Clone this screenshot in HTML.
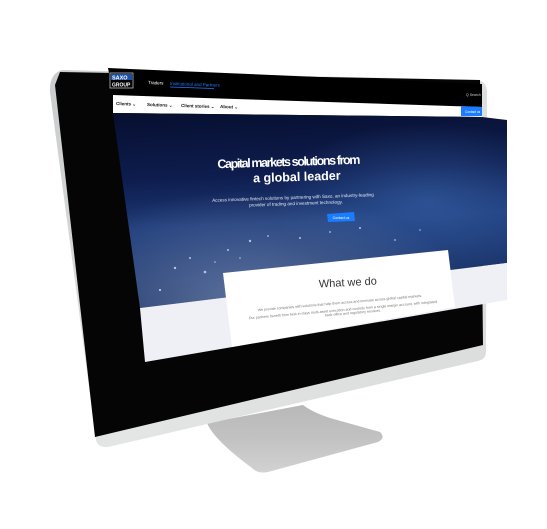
<!DOCTYPE html>
<html><head><meta charset="utf-8"><style>
html,body{margin:0;padding:0;background:#fff;width:547px;height:529px;overflow:hidden}
svg{display:block}
text{font-family:"Liberation Sans",sans-serif}
</style></head><body>
<svg width="547" height="529" viewBox="0 0 547 529" xmlns="http://www.w3.org/2000/svg">
<defs>
<linearGradient id="silver" x1="0" y1="0" x2="1" y2="0.3">
<stop offset="0" stop-color="#c9cbcc"/><stop offset="0.4" stop-color="#e4e6e6"/><stop offset="1" stop-color="#dcdede"/>
</linearGradient>
<linearGradient id="stand" x1="0" y1="0" x2="0" y2="1">
<stop offset="0" stop-color="#b8b8b8"/><stop offset="0.5" stop-color="#c2c2c2"/><stop offset="1" stop-color="#d2d2d2"/>
</linearGradient>
<linearGradient id="sky" x1="0" y1="0" x2="0.1" y2="1">
<stop offset="0" stop-color="#070f30"/><stop offset="0.35" stop-color="#0e1d4e"/><stop offset="0.6" stop-color="#1d3a78"/><stop offset="1" stop-color="#1a3163"/>
</linearGradient>
<radialGradient id="lights" cx="0.35" cy="0.95" r="0.55">
<stop offset="0" stop-color="#9fb3d6" stop-opacity="0.5"/><stop offset="1" stop-color="#9fb3d6" stop-opacity="0"/>
</radialGradient>
<radialGradient id="glow" cx="0.8" cy="0.45" r="0.4">
<stop offset="0" stop-color="#3f6fb8" stop-opacity="0.5"/><stop offset="1" stop-color="#3f6fb8" stop-opacity="0"/>
</radialGradient>
</defs>
<path d="M207,423 L303,405 Q312,412 330,418 L380,432 Q386,438 378,442 L268,472 Q258,474 252,468 Q214,440 207,423 Z" fill="url(#stand)"/>
<path d="M62,70 L478,80 Q487,82 487,92 L486,352 Q486,359 478,361 L108,447 Q98,448 96,440 L50,92 Q49,74 62,70 Z" fill="url(#silver)"/>
<path d="M60,72 L480,80 L483,345 L95,437 L55,85 Z" fill="#050505"/>
<polygon points="108,68 482,84 482,107 113,95" fill="#000"/>
<polygon points="113,95 482,107 482,117 113,113" fill="#fff"/>
<polygon points="113,113 482,117 507,120 507,263 140,308" fill="url(#sky)"/>
<polygon points="113,113 507,120 507,263 140,308" fill="url(#glow)"/>
<polygon points="113,113 507,120 507,263 140,308" fill="url(#lights)"/>
<g fill="#dfe8ff" opacity="0.75">
<circle cx="175" cy="268" r="1.2"/><circle cx="190" cy="258" r="1"/><circle cx="205" cy="272" r="1.3"/><circle cx="228" cy="250" r="1"/><circle cx="250" cy="241" r="1.2"/><circle cx="268" cy="236" r="0.9"/><circle cx="300" cy="238" r="1"/><circle cx="330" cy="232" r="0.9"/><circle cx="360" cy="228" r="1"/><circle cx="160" cy="290" r="1.1"/><circle cx="215" cy="262" r="0.8"/><circle cx="240" cy="258" r="0.8"/><circle cx="420" cy="230" r="0.8"/><circle cx="395" cy="240" r="0.9"/>
</g>
<polygon points="140,308 507,263 507,300 145,362" fill="#eef0f6"/>
<polygon points="223,273 448,250 455,307 232,347" fill="#fff"/>
<rect x="110" y="73" width="23" height="15" fill="none" stroke="#bbb" stroke-width="0.8"/>
<rect x="111" y="74" width="21" height="6" fill="#1a4fa8"/>
<text x="112" y="79.5" font-size="5.5" font-weight="bold" fill="#fff">SAXO</text>
<text x="112" y="86.5" font-size="5" font-weight="bold" fill="#fff">GROUP</text>
<text x="148" y="84" font-size="4.5" fill="#fff" transform="rotate(2 148 84)">Traders</text>
<text x="170" y="85" font-size="4.5" fill="#1e7bff" transform="rotate(2 170 85)">Institutional and Partners</text>
<line x1="170" y1="87" x2="214" y2="88.5" stroke="#1e7bff" stroke-width="0.7"/>
<text x="466" y="96" font-size="3.5" fill="#ccc">Q Search</text>
<g font-size="4.5" font-weight="bold" fill="#111">
<text x="116" y="105" transform="rotate(2 116 105)">Clients ⌄</text>
<text x="147" y="106" transform="rotate(2 147 106)">Solutions ⌄</text>
<text x="181" y="107" transform="rotate(2 181 107)">Client stories ⌄</text>
<text x="220" y="108" transform="rotate(2 220 108)">About ⌄</text>
</g>
<polygon points="461,106 482,107 482,116 461,116" fill="#1a7cff"/>
<text x="465" y="113" font-size="3.2" fill="#fff">Contact us</text>
<g fill="#fff" font-weight="bold" font-size="12.5" text-anchor="middle">
<text x="289" y="166" transform="rotate(-1.8 289 166)" textLength="143">Capital markets solutions from</text>
<text x="297" y="181" transform="rotate(-1.8 297 181)">a global leader</text>
</g>
<g fill="#dfe6f3" font-size="4.6" text-anchor="middle">
<text x="293" y="199" transform="rotate(-2 293 199)">Access innovative fintech solutions by partnering with Saxo, an industry-leading</text>
<text x="296" y="205" transform="rotate(-2 296 205)">provider of trading and investment technology.</text>
</g>
<polygon points="327,214 354,212 355,221 328,222" fill="#1a7cff"/>
<text x="341" y="219" font-size="3.5" fill="#fff" text-anchor="middle">Contact us</text>
<text x="348" y="286" font-size="11" fill="#333" text-anchor="middle" transform="rotate(-3 348 286)">What we do</text>
<g fill="#777" font-size="3.6" text-anchor="middle">
<text x="340" y="304" transform="rotate(-5 340 304)">We provide companies with solutions that help them access and innovate across global capital markets.</text>
<text x="343" y="311" transform="rotate(-5 343 311)">Our partners benefit from best-in-class multi-asset execution and custody from a single margin account, with integrated</text>
<text x="353" y="314" transform="rotate(-5 353 314)">back-office and regulatory services.</text>
</g>
</svg>
</body></html>
